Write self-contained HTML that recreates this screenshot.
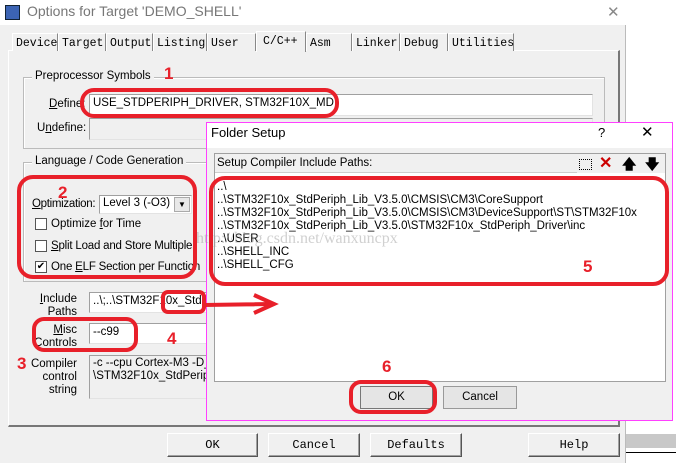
<!DOCTYPE html>
<html><head><meta charset="utf-8"><style>
*{margin:0;padding:0;box-sizing:border-box}
body{width:676px;height:463px;overflow:hidden;background:#fff;font-family:"Liberation Sans",sans-serif;font-size:11.5px;color:#000;position:relative}
.a{position:absolute}
.tab{position:absolute;top:33px;height:18px;border:1px solid #fff;border-right:1px solid #888;border-bottom:none;font-family:"Liberation Mono",monospace;font-size:11.5px;padding:3px 0 0 3px;background:#f0f0f0}
.inp{position:absolute;background:#fff;border-top:1px solid #a0a0a0;border-left:1px solid #a0a0a0;border-right:1px solid #e3e3e3;border-bottom:1px solid #e3e3e3;padding:2px 3px;white-space:nowrap;overflow:hidden}
.grp{position:absolute;border:1px solid #bbb;box-shadow:1px 1px 0 #fff inset}
.lbl{position:absolute;background:#f0f0f0;padding:0 3px}
.btn{position:absolute;background:#f0f0f0;border-top:1px solid #fff;border-left:1px solid #fff;border-right:1px solid #555;border-bottom:1px solid #555;box-shadow:inset -1px -1px 0 #a0a0a0;text-align:center;font-family:"Liberation Mono",monospace;font-size:12px;padding-top:4px}
.cb{position:absolute;width:12px;height:12px;background:#fff;border:1px solid #555}
</style></head><body>
<div class="a" style="left:0;top:0;width:626px;height:463px;background:#f0f0f0;border-right:1px solid #bbb"></div>
<div class="a" style="left:0;top:0;width:626px;height:25px;background:#fff"></div>
<div class="a" style="left:5px;top:5px;width:15px;height:15px;background:#3c64b4;border:1px solid #123"></div>
<div class="a" style="left:27px;top:3px;font-size:14px;color:#777">Options for Target 'DEMO_SHELL'</div>
<div class="a" style="left:607px;top:3px;font-size:15px;color:#888">✕</div>
<div class="a" style="left:626px;top:434px;width:50px;height:14px;background:#c8c8c8"></div>
<div class="a" style="left:626px;top:452px;width:50px;height:1px;background:#000"></div>

<div class="a" style="left:8px;top:50px;width:612px;height:377px;border-top:1px solid #fff;border-left:1px solid #fff;border-right:2px solid #777;border-bottom:2px solid #777"></div>
<div class="tab" style="left:12px;width:46px">Device</div>
<div class="tab" style="left:58px;width:48px">Target</div>
<div class="tab" style="left:106px;width:47px">Output</div>
<div class="tab" style="left:153px;width:54px">Listing</div>
<div class="tab" style="left:207px;width:49px">User</div>
<div class="tab" style="left:256px;top:31px;height:21px;width:50px;padding-left:6px">C/C++</div>
<div class="tab" style="left:306px;width:46px">Asm</div>
<div class="tab" style="left:352px;width:48px">Linker</div>
<div class="tab" style="left:400px;width:48px">Debug</div>
<div class="tab" style="left:448px;width:66px">Utilities</div>

<div class="grp" style="left:23px;top:77px;width:582px;height:72px"></div>
<div class="lbl" style="left:32px;top:70px">Preprocessor Symbols</div>
<div class="a" style="left:49px;top:98px"><u>D</u>efine:</div>
<div class="inp" style="left:89px;top:94px;width:504px;height:22px">USE_STDPERIPH_DRIVER, STM32F10X_MD</div>
<div class="a" style="left:37px;top:122px">U<u>n</u>define:</div>
<div class="inp" style="left:89px;top:118px;width:504px;height:22px;background:#f0f0f0"></div>

<div class="grp" style="left:23px;top:162px;width:200px;height:120px"></div>
<div class="lbl" style="left:32px;top:155px">Language / Code Generation</div>
<div class="a" style="left:32px;top:198px;letter-spacing:-0.3px"><u>O</u>ptimization:</div>
<div class="inp" style="left:99px;top:195px;width:93px;height:19px;padding:1px 3px">Level 3 (-O3)</div>
<div class="a" style="left:174px;top:197px;width:16px;height:15px;background:#e8e8e8;border:1px solid #aaa;font-size:8px;text-align:center;line-height:14px">▼</div>
<div class="cb" style="left:35px;top:218px"></div><div class="a" style="left:51px;top:218px">Optimize <u>f</u>or Time</div>
<div class="cb" style="left:35px;top:240px"></div><div class="a" style="left:51px;top:240px;letter-spacing:-0.2px"><u>S</u>plit Load and Store Multiple</div>
<div class="cb" style="left:35px;top:261px;font-size:10px;line-height:10px;text-align:center">✔</div><div class="a" style="left:51px;top:261px;letter-spacing:-0.2px">One <u>E</u>LF Section per Function</div>

<div class="a" style="left:36px;top:293px;width:41px;text-align:right;line-height:13px"><u>I</u>nclude<br>Paths</div>
<div class="inp" style="left:89px;top:292px;width:118px;height:21px">..\;..\STM32F10x_StdPeriph</div>
<div class="a" style="left:30px;top:324px;width:47px;text-align:right;line-height:13px"><u>M</u>isc<br>Controls</div>
<div class="inp" style="left:89px;top:323px;width:118px;height:21px">--c99</div>
<div class="a" style="left:30px;top:358px;width:47px;text-align:right;line-height:13px">Compiler<br>control<br>string</div>
<div class="inp" style="left:89px;top:355px;width:118px;height:44px;background:#f0f0f0;line-height:13px;padding-top:1px">-c --cpu Cortex-M3 -D__<br>\STM32F10x_StdPeriph</div>

<div class="btn" style="left:167px;top:433px;width:91px;height:24px">OK</div>
<div class="btn" style="left:268px;top:433px;width:92px;height:24px">Cancel</div>
<div class="btn" style="left:370px;top:433px;width:92px;height:24px">Defaults</div>
<div class="btn" style="left:528px;top:433px;width:92px;height:24px">Help</div>

<div class="a" style="left:206px;top:122px;width:467px;height:299px;background:#f0f0f0;border:1px solid #ff40ff"></div>
<div class="a" style="left:207px;top:123px;width:465px;height:25px;background:#fff"></div>
<div class="a" style="left:211px;top:125px;font-size:13px">Folder Setup</div>
<div class="a" style="left:598px;top:125px;font-size:13px">?</div>
<div class="a" style="left:641px;top:123px;font-size:15px">✕</div>
<div class="a" style="left:214px;top:153px;width:452px;height:229px;border:1px solid #a0a0a0;background:#fff"></div>
<div class="a" style="left:215px;top:154px;width:450px;height:19px;background:#f0f0f0;border-bottom:1px solid #ccc"></div>
<div class="a" style="left:217px;top:157px;font-size:11.5px">Setup Compiler Include Paths:</div>
<div class="a" style="left:577px;top:155px;width:88px;height:18px;background:#f0f0f0"></div>
<div class="a" style="left:579px;top:159px;width:13px;height:11px;border:1px dotted #000"></div>
<div class="a" style="left:599px;top:153px;font-size:16px;color:#c00;font-weight:bold">✕</div>
<div class="a" style="left:622px;top:154px;font-size:14px;font-weight:bold">🡅</div>
<div class="a" style="left:645px;top:154px;font-size:14px;font-weight:bold">🡇</div>
<div class="a" style="left:217px;top:181px;font-size:11.5px;line-height:13px">..\<br>..\STM32F10x_StdPeriph_Lib_V3.5.0\CMSIS\CM3\CoreSupport<br>..\STM32F10x_StdPeriph_Lib_V3.5.0\CMSIS\CM3\DeviceSupport\ST\STM32F10x<br>..\STM32F10x_StdPeriph_Lib_V3.5.0\STM32F10x_StdPeriph_Driver\inc<br>..\USER<br>..\SHELL_INC<br>..\SHELL_CFG</div>
<div class="a" style="left:196px;top:230px;font-family:'Liberation Serif',serif;font-size:16px;color:rgba(150,150,150,.45)">http://blog.csdn.net/wanxuncpx</div>
<div class="a" style="left:360px;top:386px;width:73px;height:23px;background:#e5e5e5;border:1px solid #777;text-align:center;padding-top:4px">OK</div>
<div class="a" style="left:443px;top:386px;width:74px;height:23px;background:#e5e5e5;border:1px solid #999;text-align:center;padding-top:4px">Cancel</div>

<svg class="a" style="left:0;top:0" width="676" height="463">
<g fill="none" stroke="#e8202a" stroke-width="4">
<rect x="82" y="90" width="255" height="26" rx="12"/>
<rect x="19" y="177" width="176" height="100" rx="14"/>
<rect x="163" y="292" width="41" height="20" rx="5"/>
<rect x="34" y="319" width="102" height="31" rx="10"/>
<rect x="211" y="178" width="456" height="106" rx="14"/>
<rect x="351" y="382" width="84" height="30" rx="10"/>
<path d="M204 305 L272 304 M254 295 L274 304 L254 313"/>
</g>
<g fill="#e8202a" font-family="Liberation Sans" font-weight="bold" font-size="17">
<text x="164" y="79">1</text><text x="58" y="198">2</text><text x="17" y="369">3</text>
<text x="167" y="344">4</text><text x="583" y="272">5</text><text x="382" y="372">6</text>
</g>
</svg>
</body></html>
